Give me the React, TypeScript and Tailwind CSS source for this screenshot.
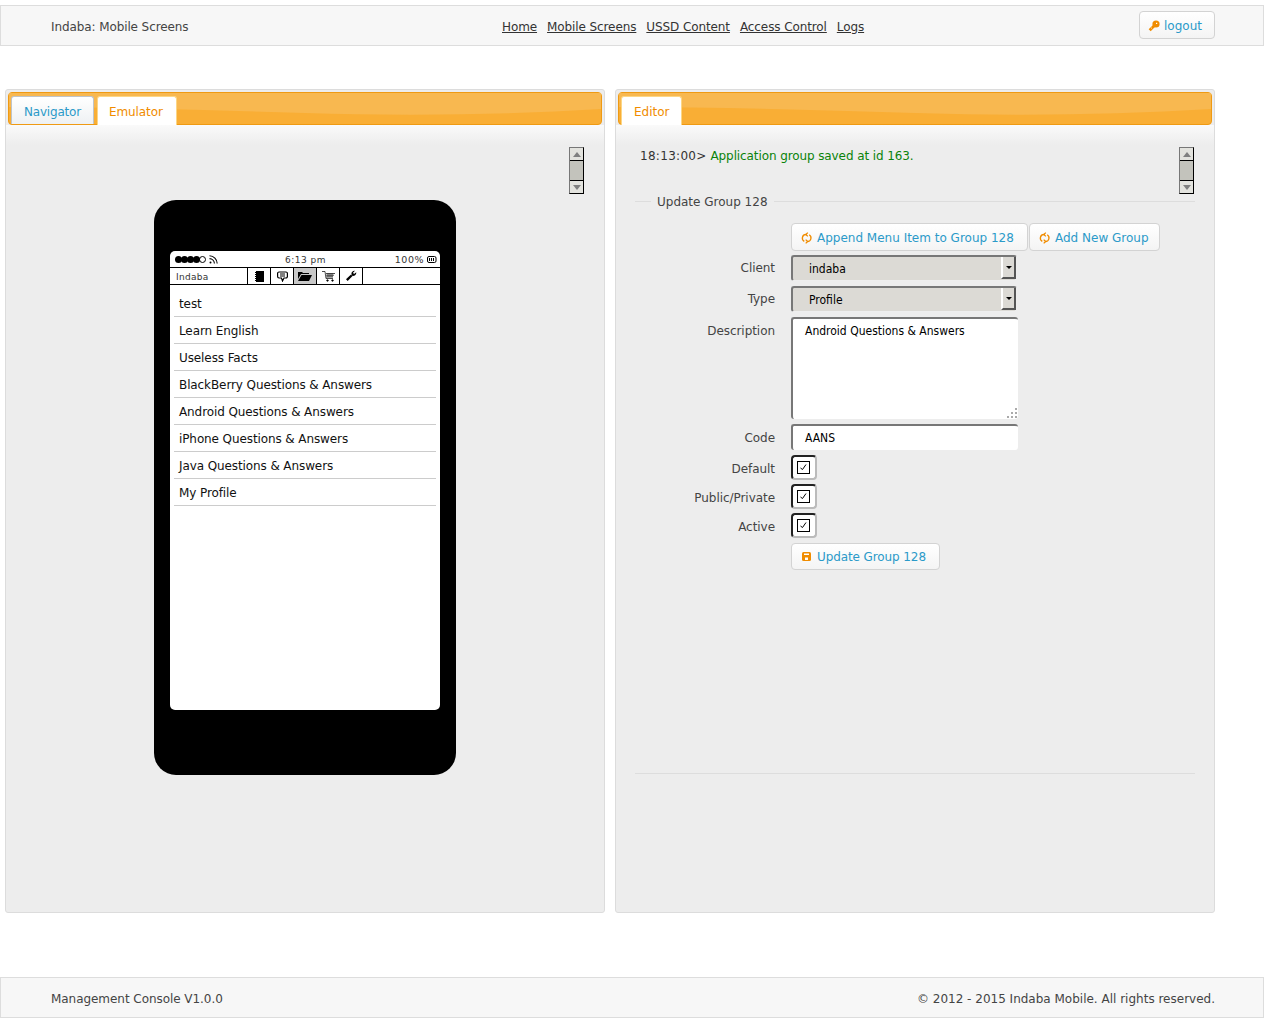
import type { ReactNode } from 'react';

const sans = "font-['DejaVu_Sans',sans-serif]";

const menuItems = [
  'test',
  'Learn English',
  'Useless Facts',
  'BlackBerry Questions & Answers',
  'Android Questions & Answers',
  'iPhone Questions & Answers',
  'Java Questions & Answers',
  'My Profile',
];

const navLinks = ['Home', 'Mobile Screens', 'USSD Content', 'Access Control', 'Logs'];

const RefreshIcon = () => (
  <svg width="12" height="12" viewBox="0 0 12 12" fill="none" stroke="#f08c00" strokeWidth="1.3" className="shrink-0">
    <path d="M5.500 2.500H5A3.600 3.600 0 0 0 3.300 9.300" />
    <path d="M8.200 2.800A3.600 3.600 0 0 1 6.500 9.500H6" />
    <path d="M6.800 .6 4.900 2.500 6.800 4.400" />
    <path d="M4.700 7.600 6.600 9.500 4.700 11.400" />
  </svg>
);

const KeyIcon = () => (
  <svg width="12" height="12" viewBox="0 0 12 12" className="shrink-0">
    <circle cx="8" cy="4" r="3.600" fill="#f08c00" />
    <path d="M6.500 5.500 1.700 10.300" stroke="#f08c00" strokeWidth="2.800" />
    <rect x="8" y="2.800" width="1.200" height="1.200" fill="#fff" />
    <rect x="3" y="7.600" width="1" height="1" fill="#ffd9a0" />
  </svg>
);

const DiskIcon = () => (
  <svg width="9" height="9" viewBox="0 0 9 9" className="shrink-0">
    <rect width="9" height="9" rx="1.500" fill="#f08c00" />
    <rect x="2" y="1.500" width="5" height="1.500" fill="#fff" />
    <rect x="3" y="5.500" width="3" height="2.500" fill="#fff" />
  </svg>
);

const Button = ({ icon, children, className }: { icon: ReactNode; children: ReactNode; className: string }) => (
  <button className={`flex items-center border border-[#d3d3d3] rounded-[4px] bg-gradient-to-b from-white to-[#f4f4f4] text-[#2b9ac9] text-[12px] ${className}`}>
    {icon}
    {children}
  </button>
);

const Tab = ({ label, active, className }: { label: string; active?: boolean; className: string }) =>
  active ? (
    <div className={`relative h-[29px] pt-[6px] mb-[-1px] bg-white border border-b-0 border-[#fcd685] rounded-t-[3px] text-[#f08c00] text-[12px] ${className}`}>
      {label}
    </div>
  ) : (
    <div className={`relative h-[28px] pt-[6px] bg-gradient-to-b from-white to-[#eef1f3] border border-b-0 border-[#bfc4c8] rounded-t-[3px] text-[#2b9ac9] text-[12px] ${className}`}>
      {label}
    </div>
  );

const TabBar = ({ children }: { children: ReactNode }) => (
  <div className="relative h-[33px] mx-[2px] mt-[2px] border border-[#ef9a13] rounded-[4px] bg-[#f9ae35] flex items-end gap-[3px] pl-[2px]">
    <svg className="absolute inset-0 w-full h-full" viewBox="0 0 600 31" preserveAspectRatio="none">
      <path d="M0 0H600V16C500 22 400 23 300 20 200 17 100 14 0 14Z" fill="#f8b850" />
    </svg>
    {children}
  </div>
);

const Scrollbar = () => (
  <div className="w-[15px] h-[47px] flex flex-col bg-[#c3c3bc] border-t border-l border-[#777] border-r border-b border-r-black border-b-black">
    <div className="h-[13px] bg-[#e3e3de] border-b border-black flex items-center justify-center">
      <div className="w-0 h-0 border-x-[4px] border-x-transparent border-b-[5px] border-b-[#808080]" />
    </div>
    <div className="flex-1" />
    <div className="h-[13px] bg-[#e3e3de] border-t border-black flex items-center justify-center">
      <div className="w-0 h-0 border-x-[4px] border-x-transparent border-t-[5px] border-t-[#808080]" />
    </div>
  </div>
);

const Panel = ({ tabs, children }: { tabs: ReactNode; children: ReactNode }) => (
  <section className="w-[600px] h-[824px] border border-[#dcdcdc] rounded-[3px] bg-[#ededed] flex flex-col">
    <TabBar>{tabs}</TabBar>
    <div className="h-[20px] bg-gradient-to-b from-[#fafafa] to-[#ededed] shrink-0" />
    {children}
  </section>
);

const PhoneToolbar = () => (
  <div className="h-[18px] border-y border-black flex text-[9px] text-[#333]">
    <div className="w-[77px] pl-[6px] pt-[3px] tracking-[0.300px]">Indaba</div>
    <div className="w-[23px] border-l border-black flex items-center justify-center">
      <svg width="9" height="11" viewBox="0 0 9 11">
        <rect x="1" width="8" height="11" />
        <path d="M0 1.500h2M0 3.500h2M0 5.500h2M0 7.500h2M0 9.500h2" stroke="#000" />
      </svg>
    </div>
    <div className="w-[23px] border-l border-black flex items-center justify-center">
      <svg width="11" height="11" viewBox="0 0 11 11" fill="none" stroke="#000" strokeWidth="1.200">
        <path d="M2 1h7a1.400 1.400 0 0 1 1.400 1.400v3.200A1.400 1.400 0 0 1 9 7H7L5.500 10 4.500 7H2A1.400 1.400 0 0 1 .6 5.600V2.400A1.400 1.400 0 0 1 2 1z" />
        <path d="M3 3h5M3 5h5" strokeWidth="1" />
      </svg>
    </div>
    <div className="w-[23px] border-l border-black bg-[#c8c8c8] flex items-center justify-center">
      <svg width="14" height="10" viewBox="0 0 14 10">
        <path d="M0 1h4l1 1h6v1H3L0 8z" />
        <path d="M3.500 4H14L11 10H0z" />
      </svg>
    </div>
    <div className="w-[23px] border-l border-black flex items-center justify-center">
      <svg width="13" height="11" viewBox="0 0 13 11" fill="none" stroke="#000" strokeWidth=".7">
        <path d="M0 .5h3l1 7h7" />
        <path d="M4 2.500h9M4 4.200h8M4 6h7M6 2.500V6M8 2.500V6M10 2.500V6" />
        <circle cx="5.500" cy="9.500" r=".8" fill="#000" />
        <circle cx="10.500" cy="9.500" r=".8" fill="#000" />
      </svg>
    </div>
    <div className="w-[24px] border-x border-black flex items-center justify-center">
      <svg width="12" height="12" viewBox="0 0 12 12">
        <path d="M6 4.500 1 9.300 2.700 11 7.500 6z" />
        <path d="M6.500 4.500C6 2.500 7.500 .6 10 .8L8 2.800 9 4 11.300 2.200C11.500 4.500 9.500 6.300 7.500 6z" />
      </svg>
    </div>
  </div>
);

const StatusRow = () => (
  <div className="h-[16px] relative flex items-center justify-between pl-[5px] pr-[3px] text-[9.500px] text-[#333] tracking-[0.500px]">
    <div className="flex items-center">
      {[0, 1, 2, 3].map((i) => (
        <span key={i} className="w-[7px] h-[7px] rounded-full bg-black -mr-px" />
      ))}
      <span className="w-[7px] h-[7px] rounded-full border border-black" />
      <svg width="9" height="9" viewBox="0 0 9 9" fill="none" stroke="#000" strokeWidth="1.100" className="ml-[3px]">
        <path d="M.5 .8A7.800 7.800 0 0 1 8.200 8.500M.5 3.600A5 5 0 0 1 5.400 8.500" />
        <circle cx="1.500" cy="7.500" r="1" fill="#000" stroke="none" />
      </svg>
    </div>
    <span className="absolute left-[115px] top-[3px] text-[9px]">6:13 pm</span>
    <div className="flex items-center gap-[3px] pt-[2px]">
      <span>100%</span>
      <svg width="10" height="7" viewBox="0 0 10 7" fill="none" stroke="#000" className="-mt-[2px]">
        <rect x=".5" y=".5" width="8.500" height="6" rx="1.500" />
        <path d="M2.500 2v3M4.500 2v3M6.500 2v3" />
      </svg>
    </div>
  </div>
);

const Phone = () => (
  <div className="w-[302px] h-[575px] bg-black rounded-[22px] mx-auto pt-[51px] px-[16px]">
    <div className="h-[459px] bg-white rounded-[5px] overflow-hidden">
      <StatusRow />
      <PhoneToolbar />
      <ul className="px-[4px] pt-[5px] text-[12px] tracking-[-0.100px] text-[#111]">
        {menuItems.map((item) => (
          <li key={item} className="h-[27px] border-b border-[#cccccc] pl-[5px] pt-[4px] leading-[20px]">
            {item}
          </li>
        ))}
      </ul>
    </div>
  </div>
);

const Select = ({ value }: { value: string }) => (
  <div className="w-[226px] h-[26px] flex bg-[#dcdad5] border-t-2 border-l-2 border-[#777] rounded-[3px] border-r border-r-[#eee] border-b border-b-[#eee] font-['DejaVu_Sans_Condensed','DejaVu_Sans',sans-serif] [font-stretch:condensed] text-[12px] leading-[18px] text-black">
    <div className="flex-1 pl-[16px] pt-[3px]">{value}</div>
    <div className="w-[15px] mb-[1px] bg-[#dcdad5] border-l-2 border-l-white border-r-2 border-r-[#555] border-b-2 border-b-[#555] flex items-center justify-center">
      <div className="w-0 h-0 border-x-[3px] border-x-transparent border-t-[3px] border-t-black" />
    </div>
  </div>
);

const Check = () => (
  <div className="w-[26px] h-[25px] bg-white border-2 border-t-[#222] border-l-[#222] border-r-[#bbb] border-b-[#bbb] rounded-[4px] flex items-center justify-center">
    <div className="w-[13px] h-[13px] -ml-px border border-black flex items-center justify-center">
      <svg width="9" height="9" viewBox="0 0 9 9" fill="none" stroke="#000">
        <path d="M1.500 5 3.500 6.500 7 1.500" />
      </svg>
    </div>
  </div>
);

const Row = ({ label, children, className }: { label?: string; children: ReactNode; className: string }) => (
  <div className={`flex ${className}`}>
    <div className="w-[140px] text-right text-[12px] tracking-[-0.050px] text-[#444]">{label}</div>
    <div className="ml-[16px]">{children}</div>
  </div>
);

const UpdateForm = () => (
  <div className="flex flex-col">
    <Row className="h-[28px]">
      <div className="flex gap-px">
        <Button icon={<RefreshIcon />} className="w-[237px] h-[28px] pl-[9px] pt-[2px] gap-[4px]">Append Menu Item to Group 128</Button>
        <Button icon={<RefreshIcon />} className="w-[131px] h-[28px] pl-[9px] pt-[2px] gap-[4px]">Add New Group</Button>
      </div>
    </Row>
    <Row label="Client" className="mt-[4px] h-[26px] leading-[27px]"><Select value="indaba" /></Row>
    <Row label="Type" className="mt-[5px] h-[26px] leading-[27px]"><Select value="Profile" /></Row>
    <Row label="Description" className="mt-[5px] h-[102px] leading-[29px]">
      <div className="relative w-[227px] h-[102px] bg-white border-t-2 border-l-2 border-[#777] rounded-[3px] pl-[12px] pt-[3px] font-['DejaVu_Sans_Condensed','DejaVu_Sans',sans-serif] [font-stretch:condensed] text-[12px] leading-[18px] text-black">
        Android Questions &amp; Answers
        <svg width="11" height="11" viewBox="0 0 11 11" fill="#aaa" className="absolute right-0 bottom-[1px]">
          <path d="M8 1h2v2H8zM4 5h2v2H4zM8 5h2v2H8zM0 9h2v2H0zM4 9h2v2H4zM8 9h2v2H8z" />
        </svg>
      </div>
    </Row>
    <Row label="Code" className="mt-[5px] h-[26px] leading-[29px]">
      <div className="w-[227px] h-[26px] bg-white border-t-2 border-l-2 border-[#777] rounded-[3px] pl-[12px] pt-[3px] font-['DejaVu_Sans_Condensed','DejaVu_Sans',sans-serif] [font-stretch:condensed] text-[12px] leading-[18px] text-black">
        AANS
      </div>
    </Row>
    <Row label="Default" className="mt-[5px] h-[25px] leading-[29px]"><Check /></Row>
    <Row label="Public/Private" className="mt-[4px] h-[25px] leading-[29px]"><Check /></Row>
    <Row label="Active" className="mt-[4px] h-[25px] leading-[29px]"><Check /></Row>
    <Row className="mt-[5px] h-[27px]">
      <Button icon={<DiskIcon />} className="w-[149px] h-[27px] pl-[10px] gap-[6px] tracking-[-0.100px]">Update Group 128</Button>
    </Row>
  </div>
);

const TopBar = () => (
  <header className="relative h-[41px] mt-[5px] border border-[#dddddd] bg-[#f7f7f7] flex items-center justify-between pl-[50px] pr-[48px] text-[12px] text-[#444]">
    <span className="mt-[2px] tracking-[-0.100px]">Indaba: Mobile Screens</span>
    <nav className="absolute left-[501px] top-[12px] flex gap-[10px] tracking-[-0.100px]">
      {navLinks.map((link) => (
        <a key={link} href="#" className="underline text-[#333]">{link}</a>
      ))}
    </nav>
    <Button icon={<KeyIcon />} className="w-[76px] h-[28px] pl-[8px] pt-[2px] gap-[4px] -mt-[2px]">logout</Button>
  </header>
);

const Footer = () => (
  <footer className="h-[41px] mt-[64px] border border-[#dddddd] bg-[#f7f7f7] flex items-center justify-between pl-[50px] pr-[48px] text-[12px] text-[#444]">
    <span className="mt-[2px] tracking-[-0.050px]">Management Console V1.0.0</span>
    <span className="mt-[2px]">© 2012 - 2015 Indaba Mobile. All rights reserved.</span>
  </footer>
);

export default function App() {
  return (
    <div className={`w-[1264px] h-[1023px] overflow-hidden bg-white ${sans}`}>
      <TopBar />
      <main className="flex gap-[10px] pl-[5px] mt-[43px]">
        <Panel tabs={<><Tab label="Navigator" className="w-[83px] pl-[12px] tracking-[-0.200px]" /><Tab label="Emulator" active className="w-[80px] pl-[11px] tracking-[-0.100px]" /></>}>
          <div className="flex justify-end pr-[20px] mt-[2px] h-[53px]">
            <Scrollbar />
          </div>
          <Phone />
        </Panel>
        <Panel tabs={<Tab label="Editor" active className="w-[61px] pl-[12px]" />}>
          <div className="relative pl-[24px] pr-[20px] mt-[2px] h-[47px] flex justify-between">
            <p className="text-[12px] text-[#333]">
              <span className="tracking-[0.300px]">18:13:00&gt;</span> <span className="text-[#0a830a] tracking-[-0.100px]">Application group saved at id 163.</span>
            </p>
            <Scrollbar />
          </div>
          <div className="mx-[19px] h-[573px] border-y border-[#dddddd] mt-[7px] relative">
            <span className="absolute left-[16px] -top-[9px] px-[6px] bg-[#ededed] text-[12px] text-[#444]">Update Group 128</span>
            <div className="pt-[21px]">
              <UpdateForm />
            </div>
          </div>
        </Panel>
      </main>
      <Footer />
    </div>
  );
}
